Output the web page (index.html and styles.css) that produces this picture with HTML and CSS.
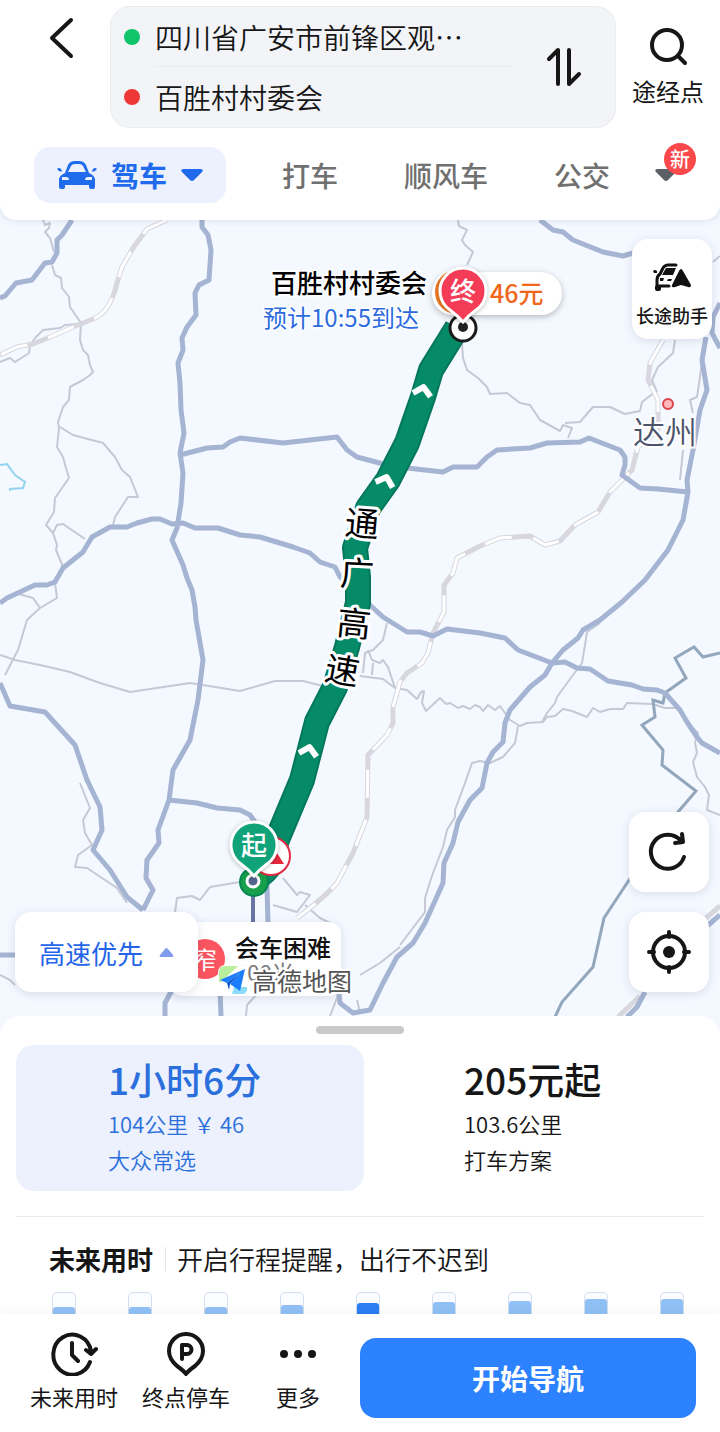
FILE: index.html
```html
<!DOCTYPE html>
<html lang="zh-CN">
  <head>
    <meta charset="UTF-8" />
    <meta name="viewport" content="width=device-width, initial-scale=1.0" />
    <title>驾车路线</title>
    <link rel="stylesheet" href="styles.css">
  </head>
  <body>
    <header class="header">
      <div class="search">
        <button class="back" aria-label="返回">
          <svg width="28" height="44" viewBox="0 0 28 44"><path d="M24 4L5 22L24 40" /></svg>
        </button>
        <div class="places">
          <div class="fields">
            <div class="field">
              <span class="dot from"></span>
              <input type="text" aria-label="起点" value="四川省广安市前锋区观…" />
            </div>
            <div class="field">
              <span class="dot to"></span>
              <input type="text" aria-label="终点" value="百胜村村委会" />
            </div>
          </div>
          <button class="swap" aria-label="交换起终点">
            <svg width="36" height="40" viewBox="0 0 36 40"><path d="M3 12L12 3V37M23 3V37L33 27" /></svg>
          </button>
        </div>
        <button class="via">
          <svg width="40" height="40" viewBox="0 0 40 40"><circle cx="19" cy="18" r="15" /><path d="M30 29L37 36" /></svg>
          <span>途经点</span>
        </button>
      </div>

      <nav class="tabs">
        <button class="tab active">
          <svg class="car" width="40" height="30" viewBox="0 0 40 30">
            <path fill-rule="evenodd" d="M8 13L11 5Q13 1 18 1H22Q27 1 29 5L32 13Q37 15 38 19V27Q38 29 36 29H34Q32 29 32 27V25H8V27Q8 29 6 29H4Q2 29 2 27V19Q3 15 8 13ZM11 12H29L26 6Q25 4 22 4H18Q15 4 14 6ZM5 17V20H12Q12 17 9 17ZM35 17H31Q28 17 28 20H35Z" />
            <path d="M0 9Q2 7 4 9L5 11Q4 12 2 11ZM40 9Q38 7 36 9L35 11Q36 12 38 11Z" />
          </svg>
          <span>驾车</span>
          <svg class="caret" width="22" height="13" viewBox="0 0 22 13"><path d="M2 0H20Q23 1 21 3L13 11Q11 13 9 11L1 3Q-1 1 2 0Z" /></svg>
        </button>
        <button class="tab">打车</button>
        <button class="tab">顺风车</button>
        <button class="tab">公交</button>
        <button class="tab more" aria-label="更多出行方式">
          <svg class="caret" width="22" height="13" viewBox="0 0 22 13"><path d="M2 0H20Q23 1 21 3L13 11Q11 13 9 11L1 3Q-1 1 2 0Z" /></svg>
          <span class="badge">新</span>
        </button>
      </nav>
    </header>

    <main class="map">
      <svg class="canvas" viewBox="0 220 720 796" preserveAspectRatio="xMidYMid slice">
        <!-- small roads -->
        <g class="lane">
          <path d="M43 220L45 225L50 223L49 228L45 232L50 238L54 252" />
          <path d="M52 265L55 275L61 278L62 288L69 297L70 307L81 323L80 340L83 350L88 355L90 365L93 372L90 375L83 380L70 387L69 400L63 407L58 422L59 428L57 447L63 457L66 468L69 478L62 488L55 498L54 512L46 525L53 533L57 545L56 550L63 567" />
          <path d="M60 427L73 435L84 438L103 443L115 457L122 470L130 477L138 497L128 497L115 517L113 525" />
          <path d="M53 533L57 525L63 524L85 539" />
          <path d="M80 324L65 325L60 328L43 330L36 337L30 345L29 353L15 362L10 358L0 362" />
          <path d="M55 583L57 598L40 608L27 620L18 650L5 675M15 593L33 598L40 608" />
          <path d="M0 655L15 660L40 665L70 672L100 683L130 692L190 683L240 691L275 681L303 681L323 686" />
          <path d="M360 676L383 679L395 688L407 690L417 699L421 692L424 691L422 703L426 711L440 698L446 704L450 703L458 708L463 706L470 709L475 705L480 707L483 711L488 705L495 710L500 706L510 720L520 726L527 723L543 722L547 717L555 716L563 709L572 711L587 717L593 708L600 712L610 709L623 709L627 703L653 704L665 708L677 708" />
          <path d="M600 623L587 632L585 645L583 657L582 663L573 675L557 697L555 703L547 713L542 722" />
          <path d="M518 726L515 743L503 757L490 763L480 761L472 763L465 783L455 810L455 817L447 830L443 847L433 873L430 882L425 898L425 912L400 945" />
          <path d="M695 743L697 753L693 762L697 777L705 787L709 795L707 810L720 815" />
          <path d="M458 220L459 226L467 230L462 240L465 245L473 252L467 265" />
          <path d="M462 343L463 358L467 370L478 378L487 387L490 394L507 393L520 403L530 405L540 420L560 431L563 425L572 428L568 438" />
          <path d="M565 423L580 422L593 407L610 407L625 414L640 411L642 402L655 392" />
          <path d="M675 340L673 353L658 367L652 380L657 392" />
          <path d="M702 363L697 397L690 400L693 413M683 450L680 480M713 262L720 256" />
          <path d="M387 623L383 640L373 650L365 653L363 673M368 650L372 660L380 663L383 660L388 667L395 688M373 663L372 675" />
          <path d="M80 783L90 808L83 820L85 833L92 845L78 855L75 867L87 868L117 888L127 903" />
          <path d="M240 882L210 887L200 900L192 896L177 898L175 912" />
          <path d="M283 878L297 895L300 892L310 895L297 912L273 905M305 905L320 918L338 927" />
          <path d="M400 947L380 963L360 975M0 975L10 980L15 985M258 993L247 1005L246 1016" />
          <path d="M340 990L330 1016M357 1000L360 1012M695 743L698 733L690 725" />
        </g>
        <path class="river" d="M0 465L7 464L15 475L25 482L23 488L10 489V491" />

        <!-- railways -->
        <g class="rail">
          <path d="M167 220L147 229L133 248L122 267L117 283Q110 313 93 319L73 327L50 337L33 344L17 347L0 355" />
          <path d="M663 340L650 363L648 380L658 400V430L638 447L632 470L610 492L598 512L575 525L560 541L545 545L530 536L500 538L480 546L457 558L453 573L444 585V612L433 633L428 653L422 663L407 673L400 682L393 707V723L387 735L368 755L367 817L353 853L337 883Q325 897 297 918" />
          <path d="M618 1017L640 996M706 918L720 906" />
        </g>
        <g class="rail-gap">
          <path d="M167 220L147 229L133 248L122 267L117 283Q110 313 93 319L73 327L50 337L33 344L17 347L0 355" />
          <path d="M663 340L650 363L648 380L658 400V430L638 447L632 470L610 492L598 512L575 525L560 541L545 545L530 536L500 538L480 546L457 558L453 573L444 585V612L433 633L428 653L422 663L407 673L400 682L393 707V723L387 735L368 755L367 817L353 853L337 883Q325 897 297 918" />
        </g>

        <!-- province border -->
        <path class="border" d="M720 653L703 657L694 647L675 658L686 678L665 693L663 703L653 700L655 717L642 725L663 750L662 765L696 791L678 812L629 880L604 918L593 967L562 1002L555 1017" />

        <!-- expressways -->
        <g class="road">
          <path d="M72 220L62 235L57 240L57 253L52 262L45 263L32 280L16 283L5 296L0 298" />
          <path d="M202 220L202 227L208 235L211 250L209 280L199 285L195 293L196 315L187 327L182 338L183 350L178 363L180 383L181 410L184 433L180 453L183 473L181 503L177 528L172 540L183 565L187 578L192 590L195 607L196 620L203 660L198 700L190 740L173 770L169 800L158 830L159 843L147 860L146 878L153 890L143 910" />
          <path d="M180 455L207 448L223 447L230 442L240 438L283 443L337 437L347 450L357 457L387 465L407 468L443 472L453 467L477 467L487 457L497 450L530 448L547 443L580 442L589 438L607 445L620 450L625 457V465L622 475L640 488L658 489L688 492" />
          <path d="M0 603L7 598L35 585L47 585L55 582L63 568L83 552L92 537L110 527L127 527L137 523L152 519L160 519L172 524L183 523L195 528L218 528L240 535L260 537L293 547L310 553L320 562L335 567L340 577L372 607L383 617L407 632L420 632L433 636L447 629L480 633L505 638L518 650L552 663L565 662L577 668L590 669L608 681L632 685L643 689L657 690L665 693L680 710L687 722L697 737L702 743L720 753" />
          <path d="M706 337L702 360L707 390L700 410L693 450L687 480L688 492L683 520L668 550L645 580L622 602L600 620L583 630L578 638L563 650L552 663L545 675L530 687L510 710L505 723L503 742L493 752L487 763L482 788L470 800L458 822L453 843L444 863L443 883L425 923L413 943L397 957L383 983L370 1010L353 1013L340 1003L339 993" />
          <path d="M720 303L713 317L712 333L720 348" />
          <path d="M540 220L553 230L563 232L573 240L603 252L623 256L633 253" />
          <path d="M0 683L10 706L45 712L75 745L87 780L100 807L102 830L93 850L110 870L127 897L143 910" />
          <path d="M169 800L197 803L217 808L240 810L250 815L255 822" />
          <path d="M267 885L268 925M172 990L165 1003V1016M220 990L221 1016M0 955H18M720 915L706 927M645 992L637 1007L627 1017" />
        </g>

        <!-- planned route -->
        <path class="route-edge" d="M457 328L431 370L423 397L407 443L388 480L368 508L355 548L358 577V603L347 647L335 687L317 722L302 780L276 842Q276 866 256 878" />
        <path class="route" d="M457 328L431 370L423 397L407 443L388 480L368 508L355 548L358 577V603L347 647L335 687L317 722L302 780L276 842Q276 866 256 878" />
        <g class="arrow">
          <path transform="translate(423 389) rotate(12)" d="M-9 6L0 -2L9 6" />
          <path transform="translate(386 479) rotate(18)" d="M-9 6L0 -2L9 6" />
          <path transform="translate(309 749) rotate(12)" d="M-9 6L0 -2L9 6" />
        </g>
        <g class="road-name">
          <text transform="translate(362 524) rotate(5)" y="12">通</text>
          <text transform="translate(357 574) rotate(3)" y="12">广</text>
          <text transform="translate(354 624) rotate(6)" y="12">高</text>
          <text transform="translate(342 671) rotate(10)" y="12">速</text>
        </g>

        <circle class="city-dot" cx="668" cy="404" r="5" />
        <text class="city" x="633" y="444">达州</text>

        <!-- start -->
        <path class="leader" d="M253 884V924" />
        <circle class="start-dot" cx="254" cy="882" r="14" />
        <circle class="warn-ring" cx="271" cy="856" r="19" />
        <path fill="#e8293d" d="M277 853L284 864H270Z" />
        <circle class="start-ring" cx="253" cy="881" r="6" />
        <path class="pin start-pin" d="M254 876Q249 870 241 864A23 23 0 1 1 267 864Q259 870 254 876Z" />
        <text class="pin-text" x="254" y="855">起</text>

        <!-- end -->
        <circle class="end-ring" cx="463" cy="328" r="13" />
        <circle fill="#222" cx="463" cy="327" r="5" />
        <g class="price">
          <rect class="pill" x="432" y="272" width="130" height="43" rx="21" />
          <circle class="coin" cx="457" cy="292" r="23" />
          <text x="490" y="303">46元</text>
        </g>
        <path class="pin end-pin" d="M463 322Q458 316 450 310A23 23 0 1 1 476 310Q468 316 463 322Z" />
        <text class="pin-text" x="463" y="301">终</text>
        <text class="dest" x="427" y="293">百胜村村委会</text>
        <text class="eta" x="419" y="327">预计10:55到达</text>
      </svg>

      <button class="card helper">
        <svg width="42" height="32" viewBox="0 0 42 32">
          <path d="M25 4H17Q14 4 12 7L9 13Q6 15 6 19V27M6 25H18" fill="none" stroke="#111" stroke-width="3" stroke-linecap="round" stroke-linejoin="round" />
          <path fill="#111" d="M15 7H25L22 14H11ZM2 10Q4 8 6 10V12H3ZM9 17H13L12 20H9ZM17 18H21L20 20H16ZM30 8Q31 8 32 10L40 24Q40 27 37 26L30 24L24 26Q20 27 21 24L28 10Q29 8 30 8ZM4 25H10V28Q10 30 8 30H6Q4 30 4 28Z" />
        </svg>
        <span>长途助手</span>
      </button>

      <div class="card warning">
        <span class="narrow">窄</span>
        <div class="warning-text">
          <strong>会车困难</strong>
          <span>100米</span>
        </div>
      </div>

      <button class="card prefer">
        <span>高速优先</span>
        <svg width="15" height="9" viewBox="0 0 15 9"><path fill="#7f9bee" d="M7 0Q8 0 9 1L14 7Q15 9 13 9H2Q0 9 1 7L6 1Q7 0 7 0Z" /></svg>
      </button>

      <div class="brand">
        <svg width="30" height="30" viewBox="0 0 30 30">
          <rect width="30" height="30" rx="7" fill="#fff" />
          <path fill="#b8ef9c" d="M7 1H20L3 17H1V7Q1 1 7 1Z" />
          <path fill="#8bdcf8" d="M16 22H29V24Q29 29 24 29H14Z" />
          <path fill="#1c7dfa" d="M27 4L2 15L9 18L22 8L12 19L22 26Z" />
          <path fill="#0b57d0" d="M9 18L22 8L12 19L11 25Z" />
        </svg>
        <span>高德地图</span>
      </div>

      <div class="tools">
        <button class="card tool" aria-label="刷新">
          <svg width="44" height="44" viewBox="0 0 44 44"><path d="M37 27A17 17 0 1 1 34 11M35 4L36 12L28 13" /></svg>
        </button>
        <button class="card tool" aria-label="定位">
          <svg width="44" height="44" viewBox="0 0 44 44"><circle cx="22" cy="22" r="16" /><path d="M22 2V7M22 37V42M2 22H7M37 22H42" /><circle class="solid" cx="22" cy="22" r="6" /></svg>
        </button>
      </div>
    </main>

    <section class="sheet">
      <div class="handle"></div>
      <div class="plans">
        <button class="plan chosen">
          <strong>1小时6分</strong>
          <span>104公里 ￥ 46</span>
          <span>大众常选</span>
        </button>
        <button class="plan">
          <strong>205元起</strong>
          <span>103.6公里</span>
          <span>打车方案</span>
        </button>
      </div>
      <div class="future">
        <h2>未来用时</h2>
        <p>开启行程提醒，出行不迟到</p>
      </div>
      <div class="chart">
        <div class="bar"><i style="height: 7px"></i></div>
        <div class="bar"><i style="height: 7px"></i></div>
        <div class="bar"><i style="height: 7px"></i></div>
        <div class="bar"><i style="height: 9px"></i></div>
        <div class="bar now"><i style="height: 11px"></i></div>
        <div class="bar"><i style="height: 12px"></i></div>
        <div class="bar"><i style="height: 13px"></i></div>
        <div class="bar"><i style="height: 15px"></i></div>
        <div class="bar"><i style="height: 15px"></i></div>
      </div>
    </section>

    <footer class="footer">
      <button class="action">
        <svg width="48" height="44" viewBox="0 0 48 44"><path d="M40 30A19 20 0 1 1 41 19M36 18L41 22L46 17M22 11V23L28 29" /></svg>
        <span>未来用时</span>
      </button>
      <button class="action">
        <svg width="48" height="44" viewBox="0 0 48 44"><path d="M24 42Q22 39 15 34Q7 27 7 19A17 17 0 1 1 41 19Q41 27 33 34Q26 39 24 42Z" /><path d="M20 27V13H25A4 4 0 0 1 25 22H20" /></svg>
        <span>终点停车</span>
      </button>
      <button class="action">
        <svg width="48" height="44" viewBox="0 0 48 44"><g class="solid"><circle cx="10" cy="22" r="4" /><circle cx="24" cy="22" r="4" /><circle cx="38" cy="22" r="4" /></g></svg>
        <span>更多</span>
      </button>
      <button class="go">开始导航</button>
    </footer>
  </body>
</html>
```

FILE: styles.css
```css
* {
  box-sizing: border-box;
}
body {
  margin: 0;
  min-height: 100vh;
  display: flex;
  flex-direction: column;
  background-color: #f3f7fe;
  color: #161616;
  font-family: "Noto Sans CJK SC", sans-serif;
}
button {
  border: none;
  padding: 0;
  margin: 0;
  background: none;
  color: inherit;
  font-family: inherit;
  cursor: pointer;
}
svg {
  display: block;
  flex-shrink: 0;
}

/* header */
.header {
  padding: 6px 0 17px;
  background-color: #fff;
  border-radius: 0 0 16px 16px;
  box-shadow: 0 1px 6px rgba(60, 60, 90, 0.12);
  position: relative;
  z-index: 2;
}
.search {
  display: grid;
  grid-template-columns: 110px 1fr 104px;
  margin-bottom: 19px;
}
.search svg {
  fill: none;
  stroke: #161616;
  stroke-width: 4;
  stroke-linecap: round;
  stroke-linejoin: round;
}
.back {
  padding: 10px 0 0 47px;
  align-self: start;
}
.places {
  display: grid;
  grid-template-columns: 1fr 103px;
  border: 1px solid #e9ebee;
  border-radius: 20px;
  background-color: #f3f4f8;
}
.field {
  display: flex;
  align-items: center;
  height: 60px;
  padding-left: 13px;
  gap: 15px;
}
.field input {
  flex: 1;
  min-width: 0;
  height: 60px;
  padding: 0;
  border: none;
  background: none;
  outline: none;
  color: #161616;
  font-family: inherit;
  font-size: 28px;
  font-weight: 350;
}
.field:first-child input {
  border-bottom: 1px solid #e8eaee;
}
.dot {
  width: 16px;
  height: 16px;
  border-radius: 50%;
}
.from {
  background-color: #10c469;
}
.to {
  background-color: #ee3838;
}
.swap {
  display: flex;
  align-items: center;
  justify-content: center;
}
.via {
  display: flex;
  flex-direction: column;
  align-items: center;
  gap: 4px;
  padding-top: 21px;
  font-size: 24px;
  line-height: 40px;
}
.tabs {
  display: grid;
  grid-template-columns: 208px repeat(3, 1fr) 70px;
  padding-left: 34px;
}
.tab {
  height: 56px;
  color: #707070;
  font-size: 28px;
  font-weight: 500;
}
.tab.active {
  display: flex;
  align-items: center;
  justify-content: center;
  gap: 14px;
  margin-right: 16px;
  border-radius: 16px;
  background-color: #ecf1fd;
  color: #1f6bec;
  font-weight: 700;
}
.car,
.caret {
  fill: currentColor;
}
.more {
  position: relative;
  padding-left: 5px;
  color: #5b6067;
}
.badge {
  position: absolute;
  top: -4px;
  left: 14px;
  width: 32px;
  border-radius: 50%;
  background-color: #fb494b;
  color: #fff;
  font-size: 20px;
  line-height: 32px;
}

/* map */
.map {
  position: relative;
  flex: 1;
  min-height: 600px;
  overflow: hidden;
  background-color: #f4f8ff;
}
.canvas {
  position: absolute;
  width: 100%;
  height: 100%;
}
.canvas g {
  stroke-linejoin: round;
}
.lane {
  fill: none;
  stroke: #c5c9d6;
  stroke-width: 2;
}
.river {
  fill: none;
  stroke: #93d3ef;
  stroke-width: 2;
}
.rail {
  fill: none;
  stroke: #d8d6df;
  stroke-width: 5;
}
.rail-gap {
  fill: none;
  stroke: #fff;
  stroke-width: 3;
  stroke-dasharray: 28 22;
}
.border {
  fill: none;
  stroke: #93a7bc;
  stroke-width: 3;
}
.road {
  fill: none;
  stroke: #a5b4d2;
  stroke-width: 5;
}
.route-edge,
.route {
  fill: none;
  stroke: #04775b;
  stroke-width: 26;
  stroke-linejoin: round;
}
.route {
  stroke: #058b68;
  stroke-width: 22;
}
.arrow {
  fill: none;
  stroke: #fff;
  stroke-width: 6;
}
.road-name {
  fill: #000;
  stroke: #fff;
  stroke-width: 6;
  paint-order: stroke;
  font-size: 34px;
  text-anchor: middle;
}
.city-dot {
  fill: #ffb7b7;
  stroke: #dc4350;
  stroke-width: 2;
}
.city {
  fill: #4b546b;
  stroke: #fff;
  stroke-width: 4;
  paint-order: stroke;
  font-size: 32px;
  font-weight: 350;
}
.leader {
  stroke: #6675a4;
  stroke-width: 4;
}
.start-dot {
  fill: #16a04c;
  stroke: #068552;
  stroke-width: 2;
}
.warn-ring {
  fill: #fff;
  stroke: #e02b40;
  stroke-width: 2;
}
.start-ring {
  fill: #56658f;
  stroke: #fff;
  stroke-width: 3;
}
.pin {
  stroke: #fff;
  stroke-width: 3;
  filter: drop-shadow(0 1px 2px rgba(0, 0, 0, 0.25));
}
.start-pin {
  fill: #10a37a;
}
.end-pin {
  fill: #f53c57;
}
.pin-text {
  fill: #fff;
  font-size: 26px;
  font-weight: 500;
  text-anchor: middle;
}
.end-ring {
  fill: #fff;
  stroke: #1c1c1c;
  stroke-width: 3;
}
.price {
  fill: #f0671c;
  font-size: 25px;
  font-weight: 500;
}
.pill {
  fill: #fff;
  filter: drop-shadow(0 2px 3px rgba(0, 0, 0, 0.25));
}
.coin {
  fill: #f07b24;
  stroke: #fff;
  stroke-width: 2;
}
.dest,
.eta {
  stroke: #fff;
  stroke-width: 3;
  paint-order: stroke;
  text-anchor: end;
}
.dest {
  font-size: 26px;
  font-weight: 500;
}
.eta {
  fill: #2d6cdf;
  font-size: 24px;
}
.card {
  border-radius: 16px;
  background-color: #fff;
  box-shadow: 0 2px 10px rgba(50, 60, 100, 0.14);
}
.helper {
  position: absolute;
  top: 19px;
  right: 8px;
  width: 80px;
  display: flex;
  flex-direction: column;
  align-items: center;
  gap: 4px;
  padding: 22px 0 6px;
  font-size: 18px;
  font-weight: 500;
  line-height: 36px;
}
.helper span {
  white-space: nowrap;
}
.tools {
  position: absolute;
  right: 11px;
  bottom: 24px;
  display: grid;
  gap: 20px;
}
.tool {
  display: flex;
  align-items: center;
  justify-content: center;
  width: 80px;
  height: 80px;
}
.tool svg,
.action svg {
  fill: none;
  stroke: #161616;
  stroke-width: 4;
  stroke-linecap: round;
  stroke-linejoin: round;
}
.tool .solid,
.action .solid {
  fill: #161616;
  stroke: none;
}
.prefer {
  position: absolute;
  left: 15px;
  bottom: 24px;
  display: flex;
  align-items: center;
  gap: 16px;
  height: 80px;
  padding: 0 24px;
  color: #2464e8;
  font-size: 26px;
}
.warning {
  position: absolute;
  left: 170px;
  bottom: 20px;
  display: flex;
  align-items: center;
  gap: 10px;
  height: 74px;
  padding: 0 10px 0 15px;
  border-radius: 12px;
}
.narrow {
  width: 40px;
  border-radius: 50%;
  background-color: #fa5560;
  color: #fff;
  font-size: 24px;
  line-height: 40px;
  text-align: center;
}
.warning-text {
  display: flex;
  flex-direction: column;
  color: #777;
  font-size: 22px;
  line-height: 24px;
}
.warning-text strong {
  color: #111;
  font-size: 24px;
  font-weight: 500;
}
.brand {
  position: absolute;
  left: 218px;
  bottom: 18px;
  display: flex;
  align-items: center;
  gap: 4px;
  color: #555;
  font-size: 25px;
  line-height: 36px;
}
.brand span {
  -webkit-text-stroke: 4px #fff;
  paint-order: stroke fill;
}

/* bottom sheet */
.sheet {
  padding-top: 10px;
  background-color: #fff;
  border-radius: 20px 20px 0 0;
}
.handle {
  width: 88px;
  height: 8px;
  margin: 0 auto 11px;
  border-radius: 4px;
  background-color: #c9c9c9;
}
.plans {
  display: grid;
  grid-template-columns: 1fr 1fr;
  gap: 8px;
  padding-left: 16px;
}
.plan {
  display: flex;
  flex-direction: column;
  padding: 10px 0 14px 92px;
  border-radius: 18px;
  font-size: 22px;
  font-weight: 350;
  line-height: 36px;
  text-align: left;
}
.plan strong {
  margin-bottom: 2px;
  font-size: 37px;
  font-weight: 500;
  line-height: 48px;
}
.chosen {
  background-color: #ecf1fd;
  color: #2a6fdb;
}
.future {
  display: flex;
  align-items: center;
  margin: 25px 16px 0;
  padding: 16px 33px 7px;
  border-top: 1px solid #e9e9e9;
  font-size: 26px;
  line-height: 52px;
}
.future h2 {
  margin: 0;
  font-size: 26px;
  font-weight: 700;
}
.future p {
  margin: 0 0 0 12px;
  padding-left: 12px;
  font-weight: 350;
  background: linear-gradient(#e3e3e3, #e3e3e3) left center / 1px 24px no-repeat;
}
.chart {
  display: grid;
  grid-template-columns: repeat(9, 1fr);
  justify-items: center;
  padding: 0 10px 0 26px;
}
.bar {
  display: flex;
  align-items: flex-end;
  width: 24px;
  height: 22px;
  border: 1px solid #d3dfee;
  border-bottom: none;
  border-radius: 5px 5px 0 0;
  background-color: #fafcff;
}
.bar i {
  width: 100%;
  border-radius: 3px 3px 0 0;
  background-color: #90c1f6;
}
.now i {
  background-color: #2c7ff5;
}

/* bottom bar */
.footer {
  display: grid;
  grid-template-columns: repeat(3, 112px) 1fr;
  align-items: start;
  padding: 16px 24px 14px 18px;
  background-color: #fff;
  box-shadow: 0 -2px 12px rgba(0, 0, 0, 0.05);
}
.action {
  display: flex;
  flex-direction: column;
  align-items: center;
  gap: 2px;
  padding-top: 2px;
  font-size: 22px;
  line-height: 36px;
}
.go {
  height: 80px;
  margin: 8px 0 0 6px;
  border-radius: 16px;
  background-color: #2c81ff;
  color: #fff;
  font-size: 28px;
  font-weight: 700;
}
```
